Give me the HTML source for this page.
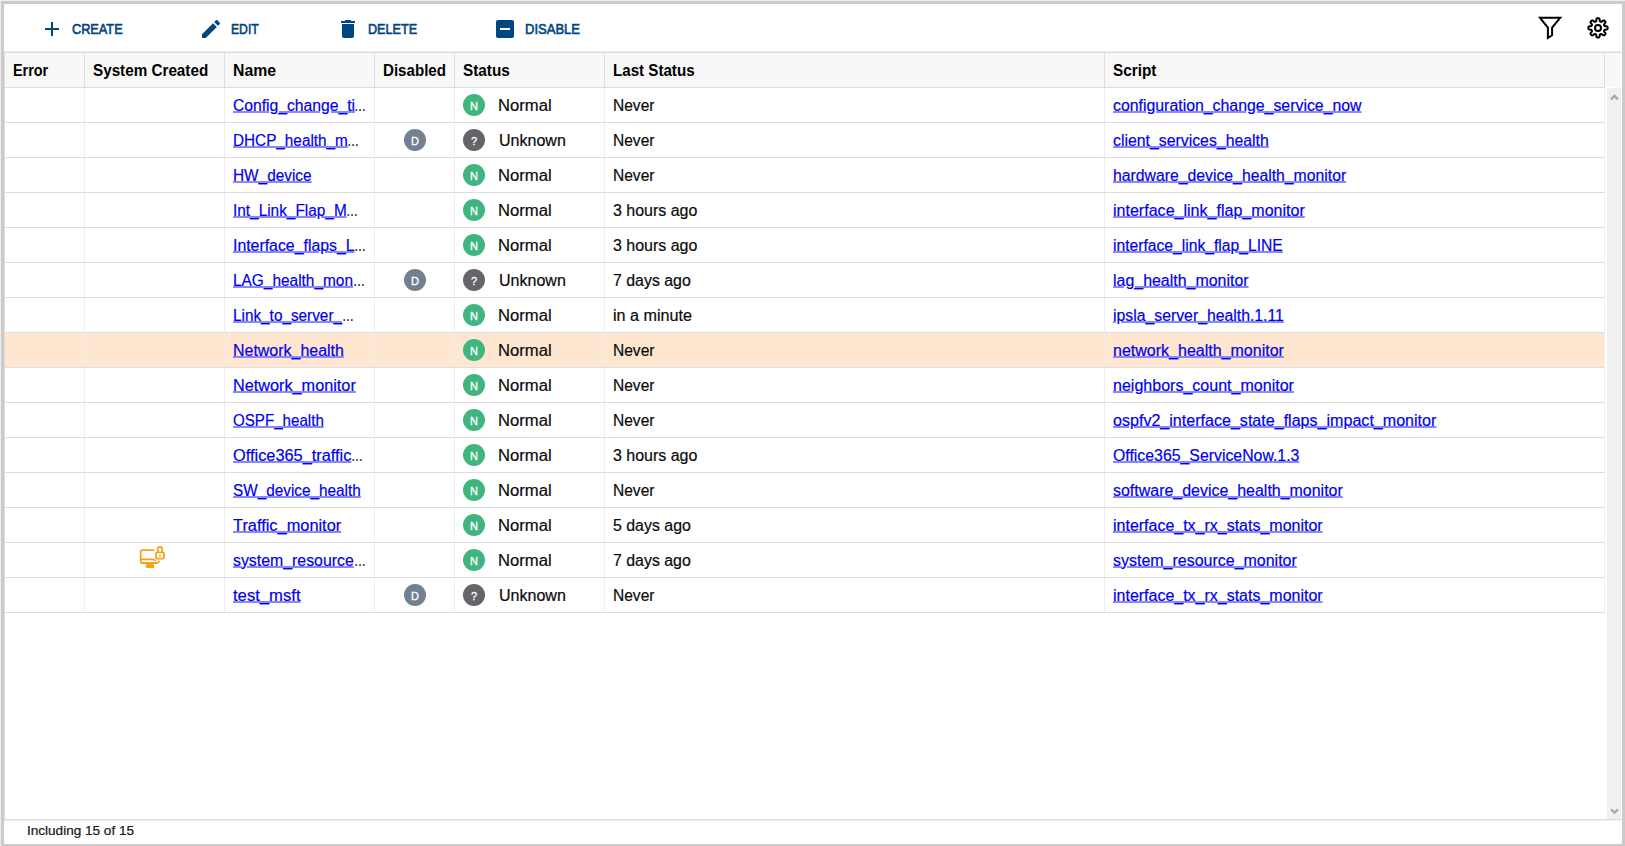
<!DOCTYPE html>
<html lang="en"><head><meta charset="utf-8"><title>Monitors</title>
<style>
html,body{margin:0;padding:0}
body{width:1625px;height:846px;overflow:hidden;background:#eeeeee;font-family:"Liberation Sans",sans-serif;font-size:16px;color:#0a0a0a;-webkit-text-stroke:0.2px #0a0a0a;position:relative}
.frame{position:absolute;left:1px;top:1px;width:1618px;height:840px;border:3px solid #cbcbcb;background:#fff;overflow:hidden}
.t{position:absolute;top:0;white-space:nowrap;transform-origin:0 50%;display:block}
.toolbar{position:absolute;left:0;top:0;width:1618px;height:47px;border-bottom:1px solid #e9ecef;background:#fff}
.btn{position:absolute;top:13px;height:24px;white-space:nowrap}
.btn .ic{position:absolute;left:0;top:0}
.bl{line-height:25px;font-size:14px;font-weight:normal;color:#00467f;-webkit-text-stroke:0.6px #00467f}
.filt{position:absolute;left:1529px;top:6px}
.gear{position:absolute;left:1580px;top:10px}
.grid{position:absolute;left:0;top:48px;width:1px;height:768px;background:#dedede}
.thead{position:absolute;left:0;top:48px;width:1617px;height:34px;background:#f8f8f8;border-top:1px solid #dcdcdc}
.th{position:absolute;top:0;box-sizing:border-box;border-right:1px solid #dddddd;border-bottom:1px solid #dcdcdc;height:35px;line-height:35px;font-weight:bold;font-size:16px;color:#000;-webkit-text-stroke:0}
.tbody{position:absolute;left:0;top:84px;width:1601px}
.tr{position:relative;height:35px;width:1601px;box-sizing:border-box;border-bottom:1px solid #dddddd}
.tr.sel{background:#ffe6d1}
.td{position:absolute;top:0;height:34px;box-sizing:border-box;border-right:1px solid #efefef;line-height:36px}
.c1{left:1px;width:80px}
.c2{left:81px;width:140px}
.c3{left:221px;width:150px}
.c4{left:371px;width:80px}
.c5{left:451px;width:150px}
.c6{left:601px;width:500px}
.c7{left:1101px;width:500px}
.c8{left:1601px;width:16px;border-right:none;border-bottom:none}
.lnk{color:#0000ee;text-decoration:underline;text-decoration-thickness:2px;text-underline-offset:0px;text-decoration-color:#8888f7;-webkit-text-stroke:0.2px #0000ee}
.badge{position:absolute;top:6px;width:22px;height:22px;border-radius:50%;text-align:center;line-height:24px;color:#fff;font-size:11px;-webkit-text-stroke:0.3px #fff}
.bn{left:8px;background:#41b580}
.bu{left:8px;background:#646569}
.bd{left:29px;background:#738091}
.sys{position:absolute;left:53px;top:2px}
.vscroll{position:absolute;left:1603px;top:84px;width:14px;height:731px;background:#f0f0f0}
.up{position:absolute;left:3px;top:5.5px}
.down{position:absolute;left:3px;top:720px}
.foot{position:absolute;left:0;top:815px;width:1618px;height:24px;border-top:1px solid #dcdcdc;background:#fff;font-size:13px;line-height:21px;color:#1a1a1a;box-shadow:inset 0 1px 0 #eef0f2}
</style></head>
<body>
<div class="frame">
<div class="toolbar">
<div class="btn" style="left:36px"><svg class="ic" viewBox="0 0 24 24" width="24" height="24"><path fill="#00467f" d="M19 13h-6v6h-2v-6H5v-2h6V5h2v6h6v2z"/></svg><span class="t bl" style="left:31.95px;transform:scaleX(0.9079)">CREATE</span></div>
<div class="btn" style="left:195px"><svg class="ic" viewBox="0 0 24 24" width="24" height="24"><path fill="#00467f" d="M3 17.25V21h3.75L17.81 9.94l-3.75-3.75L3 17.25zM20.71 7.04a.996.996 0 0 0 0-1.41l-2.34-2.34a.996.996 0 0 0-1.41 0l-1.83 1.83 3.75 3.75 1.83-1.83z"/></svg><span class="t bl" style="left:31.94px;transform:scaleX(0.8684)">EDIT</span></div>
<div class="btn" style="left:332px"><svg class="ic" viewBox="0 0 24 24" width="24" height="24"><path fill="#00467f" d="M6 19c0 1.100.9 2 2 2h8c1.100 0 2-.9 2-2V7H6v12zM19 4h-3.500l-1-1h-5l-1 1H5v2h14V4z"/></svg><span class="t bl" style="left:31.55px;transform:scaleX(0.9004)">DELETE</span></div>
<div class="btn" style="left:489px"><svg class="ic" viewBox="0 0 24 24" width="24" height="24"><path fill="#00467f" d="M19 3H5c-1.100 0-2 .9-2 2v14c0 1.100.9 2 2 2h14c1.100 0 2-.9 2-2V5c0-1.100-.9-2-2-2zm-2 10H7v-2h10v2z"/></svg><span class="t bl" style="left:32.26px;transform:scaleX(0.9302)">DISABLE</span></div>
<svg class="filt" viewBox="0 0 32 32" width="32" height="32"><path fill="none" stroke="#000" stroke-width="2" stroke-linejoin="miter" d="M7.0 7.8L27.2 7.8L19.1 17.6L19.1 25.3L14.9 28.0L14.9 17.6Z"/></svg>
<svg class="gear" viewBox="0 0 28 28" width="28" height="28" fill="none" stroke="#000" stroke-width="2" stroke-linejoin="round"><path d="M14.00 4.20L14.25 4.21L14.51 4.26L14.75 4.33L14.99 4.44L15.23 4.57L15.44 4.78L15.60 5.29L15.69 5.97L15.74 6.65L15.81 7.16L15.93 7.38L16.10 7.43L16.27 7.49L16.44 7.55L16.60 7.62L16.77 7.69L16.93 7.76L17.09 7.84L17.24 7.92L17.49 7.86L17.89 7.55L18.41 7.10L18.96 6.68L19.43 6.43L19.73 6.43L19.99 6.51L20.23 6.60L20.46 6.73L20.67 6.87L20.86 7.04L21.03 7.23L21.17 7.44L21.30 7.67L21.39 7.91L21.47 8.17L21.47 8.47L21.22 8.94L20.80 9.49L20.35 10.01L20.04 10.41L19.98 10.66L20.06 10.81L20.14 10.97L20.21 11.13L20.28 11.30L20.35 11.46L20.41 11.63L20.47 11.80L20.52 11.97L20.74 12.09L21.25 12.16L21.93 12.21L22.61 12.30L23.12 12.46L23.33 12.67L23.46 12.91L23.57 13.15L23.64 13.39L23.69 13.65L23.70 13.90L23.69 14.15L23.64 14.41L23.57 14.65L23.46 14.89L23.33 15.13L23.12 15.34L22.61 15.50L21.93 15.59L21.25 15.64L20.74 15.71L20.52 15.83L20.47 16.00L20.41 16.17L20.35 16.34L20.28 16.50L20.21 16.67L20.14 16.83L20.06 16.99L19.98 17.14L20.04 17.39L20.35 17.79L20.80 18.31L21.22 18.86L21.47 19.33L21.47 19.63L21.39 19.89L21.30 20.13L21.17 20.36L21.03 20.57L20.86 20.76L20.67 20.93L20.46 21.07L20.23 21.20L19.99 21.29L19.73 21.37L19.43 21.37L18.96 21.12L18.41 20.70L17.89 20.25L17.49 19.94L17.24 19.88L17.09 19.96L16.93 20.04L16.77 20.11L16.60 20.18L16.44 20.25L16.27 20.31L16.10 20.37L15.93 20.42L15.81 20.64L15.74 21.15L15.69 21.83L15.60 22.51L15.44 23.02L15.23 23.23L14.99 23.36L14.75 23.47L14.51 23.54L14.25 23.59L14.00 23.60L13.75 23.59L13.49 23.54L13.25 23.47L13.01 23.36L12.77 23.23L12.56 23.02L12.40 22.51L12.31 21.83L12.26 21.15L12.19 20.64L12.07 20.42L11.90 20.37L11.73 20.31L11.56 20.25L11.40 20.18L11.23 20.11L11.07 20.04L10.91 19.96L10.76 19.88L10.51 19.94L10.11 20.25L9.59 20.70L9.04 21.12L8.57 21.37L8.27 21.37L8.01 21.29L7.77 21.20L7.54 21.07L7.33 20.93L7.14 20.76L6.97 20.57L6.83 20.36L6.70 20.13L6.61 19.89L6.53 19.63L6.53 19.33L6.78 18.86L7.20 18.31L7.65 17.79L7.96 17.39L8.02 17.14L7.94 16.99L7.86 16.83L7.79 16.67L7.72 16.50L7.65 16.34L7.59 16.17L7.53 16.00L7.48 15.83L7.26 15.71L6.75 15.64L6.07 15.59L5.39 15.50L4.88 15.34L4.67 15.13L4.54 14.89L4.43 14.65L4.36 14.41L4.31 14.15L4.30 13.90L4.31 13.65L4.36 13.39L4.43 13.15L4.54 12.91L4.67 12.67L4.88 12.46L5.39 12.30L6.07 12.21L6.75 12.16L7.26 12.09L7.48 11.97L7.53 11.80L7.59 11.63L7.65 11.46L7.72 11.30L7.79 11.13L7.86 10.97L7.94 10.81L8.02 10.66L7.96 10.41L7.65 10.01L7.20 9.49L6.78 8.94L6.53 8.47L6.53 8.17L6.61 7.91L6.70 7.67L6.83 7.44L6.97 7.23L7.14 7.04L7.33 6.87L7.54 6.73L7.77 6.60L8.01 6.51L8.27 6.43L8.57 6.43L9.04 6.68L9.59 7.10L10.11 7.55L10.51 7.86L10.76 7.92L10.91 7.84L11.07 7.76L11.23 7.69L11.40 7.62L11.56 7.55L11.73 7.49L11.90 7.43L12.07 7.38L12.19 7.16L12.26 6.65L12.31 5.97L12.40 5.29L12.56 4.78L12.77 4.57L13.01 4.44L13.25 4.33L13.49 4.26L13.75 4.21Z"/><circle cx="14.0" cy="13.9" r="3"/></svg>
</div>
<div class="thead"><div class="th c1"><span class="t" style="left:8.32px;transform:scaleX(0.9001)">Error</span></div><div class="th c2"><span class="t" style="left:7.97px;transform:scaleX(0.9526)">System Created</span></div><div class="th c3"><span class="t" style="left:7.94px;transform:scaleX(0.9877)">Name</span></div><div class="th c4"><span class="t" style="left:8.03px;transform:scaleX(0.9448)">Disabled</span></div><div class="th c5"><span class="t" style="left:7.81px;transform:scaleX(0.9564)">Status</span></div><div class="th c6"><span class="t" style="left:7.63px;transform:scaleX(0.9456)">Last Status</span></div><div class="th c7"><span class="t" style="left:7.84px;transform:scaleX(0.9580)">Script</span></div><div class="th c8"></div></div>
<div class="tbody">
<div class="tr"><div class="td c1"></div><div class="td c2"></div><div class="td c3"><a class="t lnk" style="left:8.00px;transform:scaleX(0.9796)">Config_change_ti</a><span class="t ell" style="left:129.32px;transform:scaleX(0.7500)">…</span></div><div class="td c4"></div><div class="td c5"><span class="badge bn">N</span><span class="t" style="left:43.45px;transform:scaleX(1.0404)">Normal</span></div><div class="td c6"><span class="t" style="left:7.82px;transform:scaleX(0.9716)">Never</span></div><div class="td c7"><a class="t lnk" style="left:8.00px;transform:scaleX(0.9909)">configuration_change_service_now</a></div></div>
<div class="tr"><div class="td c1"></div><div class="td c2"></div><div class="td c3"><a class="t lnk" style="left:7.93px;transform:scaleX(0.9562)">DHCP_health_m</a><span class="t ell" style="left:121.93px;transform:scaleX(0.7500)">…</span></div><div class="td c4"><span class="badge bd">D</span></div><div class="td c5"><span class="badge bu">?</span><span class="t" style="left:43.97px;transform:scaleX(1.0013)">Unknown</span></div><div class="td c6"><span class="t" style="left:7.82px;transform:scaleX(0.9716)">Never</span></div><div class="td c7"><a class="t lnk" style="left:8.00px;transform:scaleX(0.9897)">client_services_health</a></div></div>
<div class="tr"><div class="td c1"></div><div class="td c2"></div><div class="td c3"><a class="t lnk" style="left:8.00px;transform:scaleX(0.9608)">HW_device</a></div><div class="td c4"></div><div class="td c5"><span class="badge bn">N</span><span class="t" style="left:43.45px;transform:scaleX(1.0404)">Normal</span></div><div class="td c6"><span class="t" style="left:7.82px;transform:scaleX(0.9716)">Never</span></div><div class="td c7"><a class="t lnk" style="left:8.00px;transform:scaleX(0.9857)">hardware_device_health_monitor</a></div></div>
<div class="tr"><div class="td c1"></div><div class="td c2"></div><div class="td c3"><a class="t lnk" style="left:8.00px;transform:scaleX(0.9612)">Int_Link_Flap_M</a><span class="t ell" style="left:121.03px;transform:scaleX(0.7500)">…</span></div><div class="td c4"></div><div class="td c5"><span class="badge bn">N</span><span class="t" style="left:43.45px;transform:scaleX(1.0404)">Normal</span></div><div class="td c6"><span class="t" style="left:7.77px;transform:scaleX(0.9978)">3 hours ago</span></div><div class="td c7"><a class="t lnk" style="left:8.00px;transform:scaleX(1.0030)">interface_link_flap_monitor</a></div></div>
<div class="tr"><div class="td c1"></div><div class="td c2"></div><div class="td c3"><a class="t lnk" style="left:7.76px;transform:scaleX(0.9906)">Interface_flaps_L</a><span class="t ell" style="left:129.03px;transform:scaleX(0.7500)">…</span></div><div class="td c4"></div><div class="td c5"><span class="badge bn">N</span><span class="t" style="left:43.45px;transform:scaleX(1.0404)">Normal</span></div><div class="td c6"><span class="t" style="left:7.77px;transform:scaleX(0.9978)">3 hours ago</span></div><div class="td c7"><a class="t lnk" style="left:8.00px;transform:scaleX(0.9790)">interface_link_flap_LINE</a></div></div>
<div class="tr"><div class="td c1"></div><div class="td c2"></div><div class="td c3"><a class="t lnk" style="left:8.00px;transform:scaleX(0.9636)">LAG_health_mon</a><span class="t ell" style="left:127.62px;transform:scaleX(0.7500)">…</span></div><div class="td c4"><span class="badge bd">D</span></div><div class="td c5"><span class="badge bu">?</span><span class="t" style="left:43.97px;transform:scaleX(1.0013)">Unknown</span></div><div class="td c6"><span class="t" style="left:7.65px;transform:scaleX(0.9933)">7 days ago</span></div><div class="td c7"><a class="t lnk" style="left:8.00px;transform:scaleX(0.9964)">lag_health_monitor</a></div></div>
<div class="tr"><div class="td c1"></div><div class="td c2"></div><div class="td c3"><a class="t lnk" style="left:8.00px;transform:scaleX(0.9575)">Link_to_server_</a><span class="t ell" style="left:116.62px;transform:scaleX(0.7500)">…</span></div><div class="td c4"></div><div class="td c5"><span class="badge bn">N</span><span class="t" style="left:43.45px;transform:scaleX(1.0404)">Normal</span></div><div class="td c6"><span class="t" style="left:7.86px;transform:scaleX(1.0099)">in a minute</span></div><div class="td c7"><a class="t lnk" style="left:8.00px;transform:scaleX(0.9870)">ipsla_server_health.1.11</a></div></div>
<div class="tr sel"><div class="td c1"></div><div class="td c2"></div><div class="td c3"><a class="t lnk" style="left:8.00px;transform:scaleX(0.9976)">Network_health</a></div><div class="td c4"></div><div class="td c5"><span class="badge bn">N</span><span class="t" style="left:43.45px;transform:scaleX(1.0404)">Normal</span></div><div class="td c6"><span class="t" style="left:7.82px;transform:scaleX(0.9716)">Never</span></div><div class="td c7"><a class="t lnk" style="left:8.00px;transform:scaleX(1.0008)">network_health_monitor</a></div></div>
<div class="tr"><div class="td c1"></div><div class="td c2"></div><div class="td c3"><a class="t lnk" style="left:8.00px;transform:scaleX(1.0154)">Network_monitor</a></div><div class="td c4"></div><div class="td c5"><span class="badge bn">N</span><span class="t" style="left:43.45px;transform:scaleX(1.0404)">Normal</span></div><div class="td c6"><span class="t" style="left:7.82px;transform:scaleX(0.9716)">Never</span></div><div class="td c7"><a class="t lnk" style="left:8.00px;transform:scaleX(1.0019)">neighbors_count_monitor</a></div></div>
<div class="tr"><div class="td c1"></div><div class="td c2"></div><div class="td c3"><a class="t lnk" style="left:8.00px;transform:scaleX(0.9452)">OSPF_health</a></div><div class="td c4"></div><div class="td c5"><span class="badge bn">N</span><span class="t" style="left:43.45px;transform:scaleX(1.0404)">Normal</span></div><div class="td c6"><span class="t" style="left:7.82px;transform:scaleX(0.9716)">Never</span></div><div class="td c7"><a class="t lnk" style="left:8.00px;transform:scaleX(1.0044)">ospfv2_interface_state_flaps_impact_monitor</a></div></div>
<div class="tr"><div class="td c1"></div><div class="td c2"></div><div class="td c3"><a class="t lnk" style="left:8.00px;transform:scaleX(1.0214)">Office365_traffic</a><span class="t ell" style="left:125.53px;transform:scaleX(0.7500)">…</span></div><div class="td c4"></div><div class="td c5"><span class="badge bn">N</span><span class="t" style="left:43.45px;transform:scaleX(1.0404)">Normal</span></div><div class="td c6"><span class="t" style="left:7.77px;transform:scaleX(0.9978)">3 hours ago</span></div><div class="td c7"><a class="t lnk" style="left:8.00px;transform:scaleX(0.9900)">Office365_ServiceNow.1.3</a></div></div>
<div class="tr"><div class="td c1"></div><div class="td c2"></div><div class="td c3"><a class="t lnk" style="left:8.00px;transform:scaleX(0.9579)">SW_device_health</a></div><div class="td c4"></div><div class="td c5"><span class="badge bn">N</span><span class="t" style="left:43.45px;transform:scaleX(1.0404)">Normal</span></div><div class="td c6"><span class="t" style="left:7.82px;transform:scaleX(0.9716)">Never</span></div><div class="td c7"><a class="t lnk" style="left:8.00px;transform:scaleX(0.9975)">software_device_health_monitor</a></div></div>
<div class="tr"><div class="td c1"></div><div class="td c2"></div><div class="td c3"><a class="t lnk" style="left:8.00px;transform:scaleX(1.0226)">Traffic_monitor</a></div><div class="td c4"></div><div class="td c5"><span class="badge bn">N</span><span class="t" style="left:43.45px;transform:scaleX(1.0404)">Normal</span></div><div class="td c6"><span class="t" style="left:7.72px;transform:scaleX(0.9945)">5 days ago</span></div><div class="td c7"><a class="t lnk" style="left:8.00px;transform:scaleX(0.9987)">interface_tx_rx_stats_monitor</a></div></div>
<div class="tr"><div class="td c1"></div><div class="td c2"><svg class="sys" viewBox="0 0 28 24" width="28" height="24" fill="none" stroke="#f9a11b" stroke-width="1.8" stroke-linecap="round" stroke-linejoin="round"><path d="M15.500 5.200H4.300Q2.700 5.200 2.700 6.800V16.400Q2.700 18 4.300 18H18.500Q20.600 18 21 16.400"/><path d="M3 14.300H15.500L17 15.200"/><path d="M9.500 19L8.600 22H15.400L14.500 19Z" fill="#f9a11b"/><rect x="18" y="7.300" width="8" height="6.400" rx="1.800"/><path d="M19.800 7V4.200a2.200 2.200 0 0 1 4.400 0V7"/><path d="M22 10v1.400" stroke-width="1.400"/></svg></div><div class="td c3"><a class="t lnk" style="left:7.95px;transform:scaleX(0.9915)">system_resource</a><span class="t ell" style="left:128.53px;transform:scaleX(0.7500)">…</span></div><div class="td c4"></div><div class="td c5"><span class="badge bn">N</span><span class="t" style="left:43.45px;transform:scaleX(1.0404)">Normal</span></div><div class="td c6"><span class="t" style="left:7.65px;transform:scaleX(0.9933)">7 days ago</span></div><div class="td c7"><a class="t lnk" style="left:8.00px;transform:scaleX(0.9985)">system_resource_monitor</a></div></div>
<div class="tr"><div class="td c1"></div><div class="td c2"></div><div class="td c3"><a class="t lnk" style="left:8.00px;transform:scaleX(1.0400)">test_msft</a></div><div class="td c4"><span class="badge bd">D</span></div><div class="td c5"><span class="badge bu">?</span><span class="t" style="left:43.97px;transform:scaleX(1.0013)">Unknown</span></div><div class="td c6"><span class="t" style="left:7.82px;transform:scaleX(0.9716)">Never</span></div><div class="td c7"><a class="t lnk" style="left:8.00px;transform:scaleX(0.9987)">interface_tx_rx_stats_monitor</a></div></div>
</div>
<div class="vscroll"><svg class="up" viewBox="0 0 9 7" width="9" height="7"><path d="M1 5.400L4.500 1.900L8 5.400" fill="none" stroke="#a8a8a8" stroke-width="2.300"/></svg><svg class="down" viewBox="0 0 9 7" width="9" height="7"><path d="M1 1.200L4.500 4.700L8 1.200" fill="none" stroke="#a8a8a8" stroke-width="2.300"/></svg></div>
<div class="foot"><span class="t" style="left:23.15px;transform:scaleX(1.0423)">Including 15 of 15</span></div>
<div class="grid"></div>
</div>
</body></html>
